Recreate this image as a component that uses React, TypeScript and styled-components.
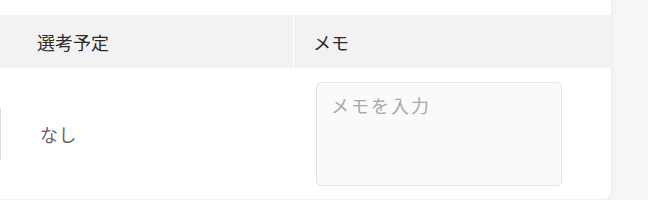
import styled, { createGlobalStyle } from "styled-components";

const GlobalStyle = createGlobalStyle`
  html, body {
    margin: 0;
    padding: 0;
    background: #f7f7f7;
    font-family: "Noto Sans CJK JP", "Noto Sans", sans-serif;
  }
`;

const App = () => {
  return (
    <>
      <GlobalStyle />
      <Page>
        <Card>
          <HeaderRow>
            <HeaderCell />
            <HeaderCell>選考予定</HeaderCell>
            <HeaderCell>メモ</HeaderCell>
          </HeaderRow>
          <BodyRow>
            <EdgeCell>
              <CutBox />
            </EdgeCell>
            <BodyCell>
              <CellText>なし</CellText>
            </BodyCell>
            <BodyCell>
              <MemoInput placeholder="メモを入力" />
            </BodyCell>
          </BodyRow>
        </Card>
      </Page>
    </>
  );
};

export default App;

//styled-components
const Page = styled.div`
  width: 648px;
  height: 200px;
  overflow: hidden;
`;

const Card = styled.div`
  width: 611px;
  height: 199px;
  box-sizing: border-box;
  padding-top: 15px;
  background: #fff;
  border-radius: 0 0 8px 0;
  box-shadow: 1px 0 6px rgba(0, 0, 0, 0.06);
  overflow: hidden;
`;

const columns = `17px 275px 1fr`;

const HeaderRow = styled.div`
  display: grid;
  grid-template-columns: ${columns};
  column-gap: 1px;
  background: #fff;
  height: 53px;
`;

const HeaderCell = styled.div`
  background: #f2f2f2;
  display: flex;
  align-items: center;
  padding-left: 19px;

  font-size: 18px;
  color: #2b2b2b;
  white-space: nowrap;
`;

const BodyRow = styled.div`
  display: grid;
  grid-template-columns: ${columns};
  column-gap: 1px;
  height: 131px;
`;

const BodyCell = styled.div`
  display: flex;
  align-items: center;
  padding-left: 22px;
`;

const EdgeCell = styled.div`
  display: flex;
  align-items: center;
  justify-content: flex-end;
  padding-right: 16px;
  overflow: hidden;
`;

const CutBox = styled.div`
  flex-shrink: 0;
  width: 80px;
  height: 57px;
  box-sizing: border-box;
  border: 1px solid #dcdcdc;
  border-radius: 4px;
  margin-top: 2px;
`;

const CellText = styled.span`
  font-size: 18px;
  letter-spacing: 0.5px;
  color: #666;
`;

const MemoInput = styled.textarea`
  width: 246px;
  height: 104px;
  box-sizing: border-box;
  margin: 0;
  padding: 10px 14px;
  border: 1px solid #e3e3e3;
  border-radius: 5px;
  background: #fafafa;
  resize: none;
  outline: none;

  font-family: "Noto Sans CJK JP", "Noto Sans", sans-serif;
  font-size: 18px;
  letter-spacing: 2px;
  line-height: 1.4;
  color: #333;

  &::placeholder {
    color: #a8a8a8;
  }
`;
